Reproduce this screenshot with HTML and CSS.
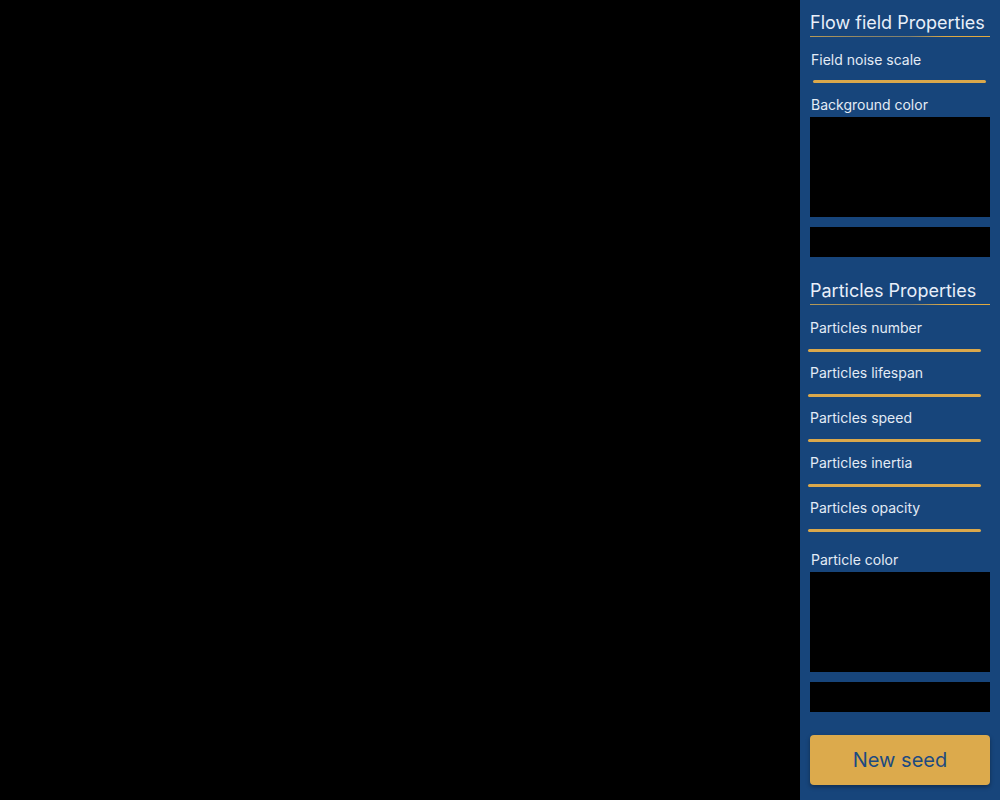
FILE: index.html
```html
<!DOCTYPE html>
<html>
<head>
<meta charset="utf-8">
<link rel="stylesheet" href="styles.css">
</head>
<body>
<div class="app">
  <div class="canvas"></div>
  <aside class="panel">
    <section class="group group-flow">
      <h2 class="title">Flow field Properties</h2>
      <div class="label">Field noise scale</div>
      <div class="slider"></div>
      <div class="label label-color">Background color</div>
      <div class="swatch"></div>
      <div class="hexbox"></div>
    </section>
    <section class="group group-particles">
      <h2 class="title">Particles Properties</h2>
      <div class="label">Particles number</div>
      <div class="slider"></div>
      <div class="label">Particles lifespan</div>
      <div class="slider"></div>
      <div class="label">Particles speed</div>
      <div class="slider"></div>
      <div class="label">Particles inertia</div>
      <div class="slider"></div>
      <div class="label">Particles opacity</div>
      <div class="slider"></div>
      <div class="label label-color label-particle">Particle color</div>
      <div class="swatch"></div>
      <div class="hexbox"></div>
    </section>
    <button class="seed">New seed</button>
  </aside>
</div>
</body>
</html>
```
FILE: styles.css
```css
html, body {
  margin: 0;
  padding: 0;
  background: #000;
  font-family: Inter, "Noto Sans", sans-serif;
}
.app {
  display: flex;
  width: 1000px;
  height: 800px;
}
.canvas {
  flex: 1;
  background: #000;
}
.panel {
  width: 200px;
  box-sizing: border-box;
  padding: 12px 10px 0 10px;
  background: #17457b;
  display: flex;
  flex-direction: column;
}
.group {
  display: flex;
  flex-direction: column;
}
.title {
  margin: 0;
  padding: 0;
  font-size: 18px;
  line-height: 22px;
  font-weight: 400;
  color: #e8eff9;
}
.title::after {
  content: "";
  display: block;
  height: 1px;
  margin-top: 2px;
  background: linear-gradient(90deg, #b89a55 0%, #8d8566 30%, #7f8070 55%, #dba845 75%, #e2a93e 100%);
}
.label {
  font-size: 14px;
  line-height: 16px;
  color: #e3ebf5;
  margin-top: 13px;
}
.group .title + .label {
  margin-top: 15px;
}
.slider {
  height: 3px;
  width: 173px;
  margin-top: 13px;
  border-radius: 2px;
  background: #dba84b;
}
.group-flow .label {
  margin-left: 1px;
}
.group-flow .slider {
  margin-left: 3px;
  margin-top: 12px;
}
.group-flow .label-color {
  margin-top: 14px;
}
.group-particles {
  margin-top: 23px;
}
.group-particles .slider {
  margin-left: -2px;
}
.label-particle {
  margin-top: 20px;
  margin-left: 1px;
}
.swatch {
  height: 100px;
  background: #000;
  margin-top: 4px;
}
.hexbox {
  height: 30px;
  background: #000;
  margin-top: 10px;
}
.seed {
  margin-top: 23px;
  height: 50px;
  width: 180px;
  border: none;
  border-radius: 4px;
  background: #dcaa4c;
  color: #1d4a80;
  font-family: Inter, "Noto Sans", sans-serif;
  font-size: 20px;
  box-shadow: 0 2px 4px rgba(0, 0, 0, 0.35);
  padding: 0;
}
```
